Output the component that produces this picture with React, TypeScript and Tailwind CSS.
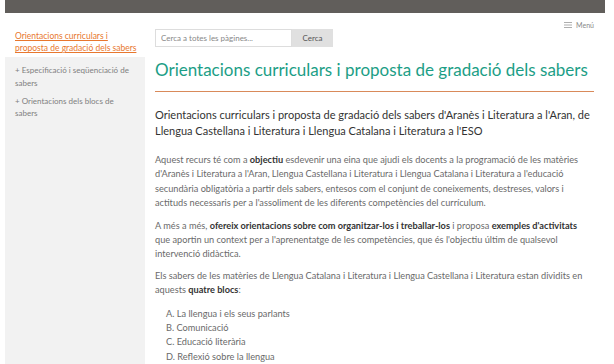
import React from 'react';

const font = { fontFamily: 'Lato, "Noto Sans", sans-serif' };

function Sidebar() {
  return (
    <aside className="w-[140px] shrink-0 flex flex-col">
      <div className="pl-[10px] pr-[3px] pt-[17px] pb-[3px] bg-white">
        <a href="#" className="text-[8.5px] leading-[12px] text-[#e8772e] underline block">
          Orientacions curriculars i proposta de gradació dels sabers
        </a>
      </div>
      <ul className="flex-1 bg-[#f2f2f2] pl-[10px] pr-[8px] pt-[7px] text-[8px] leading-[12.5px] text-[#808080]">
        <li className="mb-[5.5px]">+ Especificació i seqüenciació de sabers</li>
        <li>+ Orientacions dels blocs de sabers</li>
      </ul>
    </aside>
  );
}

function MenuButton() {
  return (
    <div className="flex items-center gap-[4px] text-[7px] text-[#888] -mt-[9px]">
      <svg width="8" height="6" viewBox="0 0 8 6" fill="none" stroke="#999" strokeWidth="0.8">
        <path d="M0 0.5H8M0 3H8M0 5.5H8" />
      </svg>
      <span>Menú</span>
    </div>
  );
}

export default function App() {
  return (
    <div className="w-[614px] h-[364px] overflow-hidden bg-white px-[5px]" style={font}>
      <div className="h-[13px] bg-[#615e5b] mr-[4px]" />
      <div className="flex h-[351px]">
        <Sidebar />
        <main className="flex-1 pl-[10px] pr-[15px]">
          <div className="flex items-start justify-between pt-[16px]">
            <div className="flex h-[18px]">
              <input
                placeholder="Cerca a totes les pàgines..."
                className="w-[137px] h-[18px] border border-[#ddd] px-[5px] text-[8px] text-[#555] placeholder:text-[#888] outline-none"
              />
              <button className="w-[41px] h-[18px] bg-[#e0e0e0] text-[8px] text-[#555]">Cerca</button>
            </div>
            <MenuButton />
          </div>
          <h1 className="mt-[11px] text-[17px] leading-[24px] text-[#1c9e86] pb-[9px] border-b border-[#d98a5a]">
            Orientacions curriculars i proposta de gradació dels sabers
          </h1>
          <h2 className="mt-[15px] text-[11px] leading-[15.5px] text-[#333]">
            Orientacions curriculars i proposta de gradació dels sabers d'Aranès i Literatura a l'Aran, de Llengua Castellana i Literatura i Llengua Catalana i Literatura a l'ESO
          </h2>
          <div className="text-[9.2px] leading-[14.3px] text-[#6a6a6a]">
            <p className="mt-[15px]">
              Aquest recurs té com a <b className="text-[#333]">objectiu</b> esdevenir una eina que ajudi els docents a la programació de les matèries d'Aranès i Literatura a l'Aran, Llengua Castellana i Literatura i Llengua Catalana i Literatura a l'educació secundària obligatòria a partir dels sabers, entesos com el conjunt de coneixements, destreses, valors i actituds necessaris per a l'assoliment de les diferents competències del currículum.
            </p>
            <p className="mt-[8.5px]">
              A més a més, <b className="text-[#333]">ofereix orientacions sobre com organitzar-los i treballar-los</b> i proposa <b className="text-[#333]">exemples d'activitats</b> que aportin un context per a l'aprenentatge de les competències, que és l'objectiu últim de qualsevol intervenció didàctica.
            </p>
            <p className="mt-[7.5px]">
              Els sabers de les matèries de Llengua Catalana i Literatura i Llengua Castellana i Literatura estan dividits en aquests <b className="text-[#333]">quatre blocs</b>:
            </p>
            <ul className="mt-[9px] pl-[11px]">
              <li>A. La llengua i els seus parlants</li>
              <li>B. Comunicació</li>
              <li>C. Educació literària</li>
              <li>D. Reflexió sobre la llengua</li>
            </ul>
          </div>
        </main>
      </div>
    </div>
  );
}
